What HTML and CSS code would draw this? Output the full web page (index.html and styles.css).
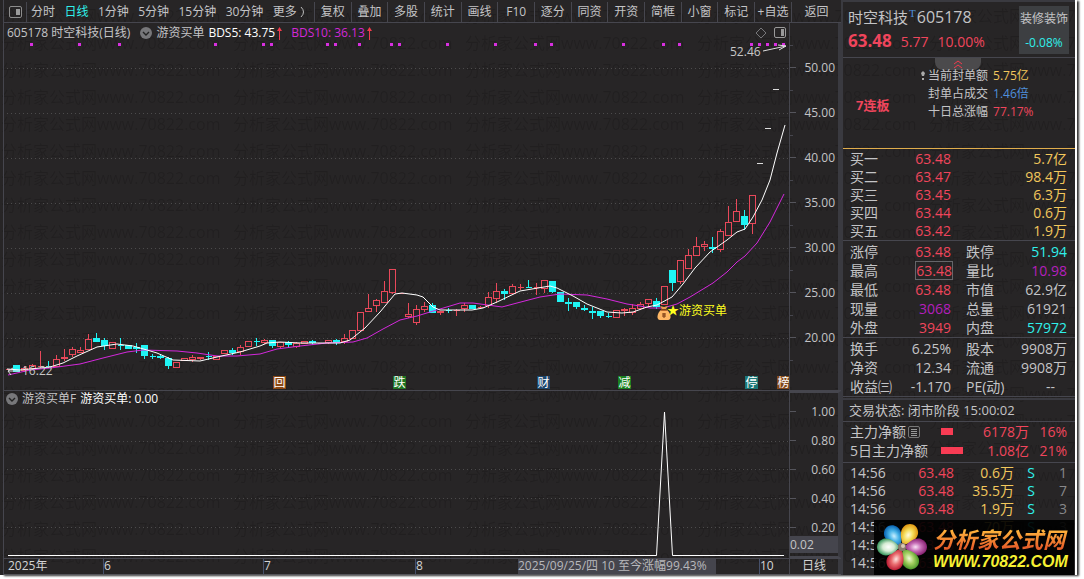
FILE: index.html
```html
<!DOCTYPE html>
<html lang="zh-CN">
<head>
<meta charset="utf-8">
<title>时空科技 605178</title>
<link rel="stylesheet" href="styles.css">
</head>
<body>
<div class="app">
  <svg class="watermark" aria-hidden="true">
    <defs>
      <pattern id="wm" x="1" y="3" width="232" height="27" patternUnits="userSpaceOnUse">
        <text class="watermark-text" x="0" y="19">分析家公式网www.70822.com</text>
      </pattern>
    </defs>
    <rect width="100%" height="100%" fill="url(#wm)"/>
  </svg>

  <main class="main">
    <nav class="toolbar">
      <button class="tool tool-icon" aria-label="侧栏">
        <svg width="13" height="12" viewBox="0 0 13 12"><rect x=".5" y=".5" width="12" height="11" rx="1.5" fill="none" stroke="#8c8c8c"/><rect x="7" y="3" width="4" height="6" fill="#9a9a9a"/></svg>
      </button>
      <div class="periods">
        <button class="period">分时</button><button class="period active">日线</button><button class="period">1分钟</button><button class="period">5分钟</button><button class="period">15分钟</button><button class="period">30分钟</button><button class="period">更多 <svg width="5" height="10" viewBox="0 0 5 10"><path d="M1 0Q6 5 1 10" fill="none" stroke="#bbb"/></svg></button>
      </div>
      <button class="tool">复权</button><button class="tool">叠加</button><button class="tool">多股</button><button class="tool">统计</button><button class="tool">画线</button><button class="tool">F10</button><button class="tool">逐分</button><button class="tool">同资</button><button class="tool">开资</button><button class="tool">简框</button><button class="tool">小窗</button><button class="tool">标记</button><button class="tool">+自选</button><button class="tool tool-back">返回</button>
    </nav>

    <section class="pane price-pane">
      <div class="plot">
        <div class="legend">
          <span class="legend-name">605178 时空科技(日线)</span>
          <svg width="12" height="12" viewBox="0 0 12 12"><circle cx="6" cy="6" r="6" fill="#77777a"/><path d="M3 5l3 3 3-3" fill="none" stroke="#222" stroke-width="1.4"/></svg>
          <span>游资买单</span>
          <span class="white value">BDS5: 43.75<svg class="up" width="5" height="13" viewBox="0 0 5 13"><path d="M2.500 13V2" stroke="#f23b4c"/><path d="M2.500 0L5 4H0z" fill="#f23b4c"/></svg></span>
          <span class="magenta value">BDS10: 36.13<svg class="up" width="5" height="13" viewBox="0 0 5 13"><path d="M2.500 13V2" stroke="#f23b4c"/><path d="M2.500 0L5 4H0z" fill="#f23b4c"/></svg></span>
          <span class="legend-tools">
            <svg width="12" height="12" viewBox="0 0 12 12"><path d="M6 1l5 5-5 5-5-5z" fill="none" stroke="#77777a"/></svg>
            <svg width="12" height="11" viewBox="0 0 12 11"><rect x=".5" y=".5" width="11" height="10" rx="1.5" fill="none" stroke="#9a9a9a"/><rect x="7" y="2" width="3" height="7" fill="#9a9a9a"/></svg>
          </span>
        </div>
        <svg class="chart" viewBox="4 43 785 347" role="img" aria-label="日线K线图">
          <path class="grid" d="M7 68.500H789M7 113.500H789M7 158.500H789M7 203.500H789M7 248.500H789M7 293.500H789M7 338.500H789"/>
          <g id="signals" shape-rendering="crispEdges"></g>
          <g id="candles" shape-rendering="crispEdges"></g>
          <path d="M757 163.500h6M765 128.500h6M773 89.500h6" stroke="#ddd"/>
          <path class="ma-slow" d="M8 375L30 370 50 368 80 364 103 358 127 352 143 350 177 351 197 353 217 356 237 356 260 354 277 349 300 346 327 343 353 342 367 338 383 329 400 320 417 316 430 312 450 306 460 303 473 303 502 307 517 303 540 297 560 294 587 295 607 299 627 304 640 306 650 308 663 308 677 304 690 297 713 283 727 272 737 262 745 256 757 243 770 222 784 194"/>
          <path class="ma-fast" d="M7 369L20 370 50 367 63 363 77 356 97 347 117 344 133 346 147 350 157 353 173 360 200 361 217 357 240 352 260 346 267 343 280 342 300 343 340 343 350 340 365 328 380 312 395 294 402 293 417 295 423 297 433 307 440 310 472 310 483 308 497 302 520 291 532 289 550 286 557 288 573 296 587 304 607 312 622 313 633 312 647 307 657 305 672 297 683 284 695 268 710 252 727 240 737 232 745 229 753 217 762 200 770 180 777 153 785 125"/>
          <text class="note" x="730" y="56">52.46</text>
          <path class="arrow" d="M763 51L786 46M778 45l8 1-7 4"/>
          <text class="note" x="22" y="375">16.22</text>
          <path class="arrow" d="M20 371H8M13 368l-5 3 3 4"/>
          <g transform="translate(657 306)">
            <path d="M5 3L3 0l4 1 4-1-2 3z" fill="#e8a04a"/>
            <path d="M4 4C0 7-1 14 3 14h8c4 0 3-7-1-10z" fill="#ffb765"/>
            <path d="M4 4h6" stroke="#9b4a1d" stroke-width="1.500"/>
            <path d="M5 8h4M5 10h4M7 7v5" stroke="#743713"/>
          </g>
          <text class="signal-text" x="667" y="315">★游资买单</text>
          <g class="tags">
            <rect x="273" y="376" width="13" height="13" fill="#8b4713"/><text x="279.500" y="387">回</text>
            <rect x="393" y="376" width="13" height="13" fill="#1e7422"/><text x="399.500" y="387">跌</text>
            <rect x="537" y="376" width="13" height="13" fill="#1c466d"/><text x="543.500" y="387">财</text>
            <rect x="618" y="376" width="13" height="13" fill="#1a8020"/><text x="624.500" y="387">减</text>
            <rect x="745" y="376" width="13" height="13" fill="#1b7777"/><text x="751.500" y="387">停</text>
            <rect x="777" y="376" width="12" height="13" fill="#83491a"/><text x="783.500" y="387">榜</text>
          </g>
        </svg>
      </div>
      <ul class="axis">
        <li>50.00</li><li>45.00</li><li>40.00</li><li>35.00</li><li>30.00</li><li>25.00</li><li>20.00</li>
      </ul>
    </section>

    <section class="pane signal-pane">
      <div class="plot">
        <div class="legend legend-sub">
          <svg width="12" height="12" viewBox="0 0 12 12"><circle cx="6" cy="6" r="6" fill="#77777a"/><path d="M3 5l3 3 3-3" fill="none" stroke="#222" stroke-width="1.4"/></svg>
          <span>游资买单F</span><span class="white">游资买单: 0.00</span>
        </div>
        <svg class="chart" viewBox="4 407 785 151" role="img" aria-label="游资买单信号">
          <path class="grid" d="M7 441.500H789M7 469.500H789M7 498.500H789M7 527.500H789"/>
          <path class="spike" d="M8 555.500H656.500L664.500 412 672.500 555.500H784"/>
        </svg>
      </div>
      <ul class="axis axis-sub">
        <li>1.00</li><li>0.80</li><li>0.60</li><li>0.40</li><li>0.20</li><li class="cursor">0.02</li>
      </ul>
    </section>

    <footer class="dates">
      <div class="months">
        <span>2025年</span><span class="mark">6</span><span class="mark">7</span><span class="mark">8</span>
        <span class="hover-date">2025/09/25/四 10 至今涨幅99.43%</span><span></span><span class="mark">10</span>
      </div>
      <span class="cycle">日线</span>
    </footer>
  </main>

  <aside class="panel">
    <header class="quote">
      <div>
        <h1 class="stock">时空科技<sup>T</sup><span class="code">605178</span></h1>
        <p class="price red"><b>63.48</b><span>5.77</span><span>10.00%</span></p>
      </div>
      <a class="sector" href="#sector"><span>装修装饰</span><span class="cyan">-0.08%</span></a>
    </header>

    <section class="seal">
      <button class="fold" aria-label="收起"><svg width="10" height="9" viewBox="0 0 10 9"><path d="M1 4l4-3 4 3M1 8l4-3 4 3" fill="none" stroke="#f23b4c"/></svg></button>
      <div class="seal-body">
        <strong class="streak">7连板</strong>
        <table class="seal-table">
          <tr><th><svg class="pin" width="4" height="9" viewBox="0 0 4 9"><path d="M2 0l2 2-1 3H1L0 2z" fill="#aaa"/><path d="M1 7h2v2H1z" fill="#aaa"/></svg>当前封单额</th><td class="yellow">5.75亿</td></tr>
          <tr><th>封单占成交</th><td class="blue">1.46倍</td></tr>
          <tr><th>十日总涨幅</th><td class="red">77.17%</td></tr>
        </table>
      </div>
    </section>

    <table class="rows bids">
      <tr><th>买一</th><td class="red">63.48</td><td class="yellow">5.7亿</td></tr>
      <tr><th>买二</th><td class="red">63.47</td><td class="yellow">98.4万</td></tr>
      <tr><th>买三</th><td class="red">63.45</td><td class="yellow">6.3万</td></tr>
      <tr><th>买四</th><td class="red">63.44</td><td class="yellow">0.6万</td></tr>
      <tr><th>买五</th><td class="red">63.42</td><td class="yellow">1.9万</td></tr>
    </table>

    <table class="rows stats">
      <tr><th>涨停</th><td class="red">63.48</td><th>跌停</th><td class="cyan">51.94</td></tr>
      <tr><th>最高</th><td class="red"><span class="boxed">63.48</span></td><th>量比</th><td class="purple">10.98</td></tr>
      <tr><th>最低</th><td class="red">63.48</td><th>市值</th><td>62.9亿</td></tr>
      <tr><th>现量</th><td class="purple">3068</td><th>总量</th><td>61921</td></tr>
      <tr><th>外盘</th><td class="red">3949</td><th>内盘</th><td class="cyan">57972</td></tr>
    </table>

    <table class="rows stats">
      <tr><th>换手</th><td>6.25%</td><th>股本</th><td>9908万</td></tr>
      <tr><th>净资</th><td>12.34</th><th>流通</th><td>9908万</td></tr>
      <tr><th>收益㈢</th><td>-1.170</td><th>PE(动)</th><td class="empty">--</td></tr>
    </table>

    <p class="status">交易状态: 闭市阶段 15:00:02</p>

    <table class="rows flow">
      <tr><th>主力净额<svg class="doc" width="12" height="12" viewBox="0 0 12 12"><rect x=".5" y=".5" width="11" height="11" rx="1.5" fill="none" stroke="#777"/><path d="M3 3.500h6M3 5.500h6M3 7.500h6M3 9.500h6" stroke="#999"/></svg></th><td><span class="bar bar-day"></span></td><td class="red">6178万</td><td class="red">16%</td></tr>
      <tr><th>5日主力净额</th><td><span class="bar bar-week"></span></td><td class="red">1.08亿</td><td class="red">21%</td></tr>
    </table>

    <div class="trades">
      <table class="rows ticks">
        <tr><th>14:56</th><td class="red">63.48</td><td class="yellow">0.6万</td><td class="cyan side">S</td><td class="count">1</td></tr>
        <tr><th>14:56</th><td class="red">63.48</td><td class="yellow">35.5万</td><td class="cyan side">S</td><td class="count">7</td></tr>
        <tr><th>14:56</th><td class="red">63.48</td><td class="yellow">1.9万</td><td class="cyan side">S</td><td class="count">3</td></tr>
        <tr><th>14:56</th><td class="red">63.48</td><td class="yellow">70万</td><td class="cyan side">S</td><td class="count">3</td></tr>
        <tr><th>14:56</th><td class="red">63.48</td><td></td><td></td><td></td></tr>
        <tr><th>14:56</th><td class="red">63.48</td><td></td><td></td><td></td></tr>
      </table>
      <a class="logo" href="#site">
        <svg width="54" height="54" viewBox="0 0 54 54" aria-hidden="true">
          <defs>
            <radialGradient id="p1"><stop offset="0" stop-color="#c9efff"/><stop offset=".5" stop-color="#48b4e8"/><stop offset="1" stop-color="#0d68b4"/></radialGradient>
            <radialGradient id="p2"><stop offset="0" stop-color="#fffce0"/><stop offset=".5" stop-color="#f4dc58"/><stop offset="1" stop-color="#e09a14"/></radialGradient>
            <radialGradient id="p3"><stop offset="0" stop-color="#fbe3f6"/><stop offset=".5" stop-color="#c46ab4"/><stop offset="1" stop-color="#8a2474"/></radialGradient>
            <radialGradient id="p4"><stop offset="0" stop-color="#effbd8"/><stop offset=".5" stop-color="#a5cf62"/><stop offset="1" stop-color="#4f9a2c"/></radialGradient>
            <radialGradient id="p5"><stop offset="0" stop-color="#ffe6e2"/><stop offset=".5" stop-color="#ea6d70"/><stop offset="1" stop-color="#bc1f36"/></radialGradient>
            <radialGradient id="p6"><stop offset="0" stop-color="#fff"/><stop offset=".5" stop-color="#d6ecd4"/><stop offset="1" stop-color="#3f9b62"/></radialGradient>
            <path id="petal" d="M0-2C-4-6-10-12-8-19-5-27 5-27 8-19 10-12 4-6 0-2z"/>
          </defs>
          <g transform="translate(28 26)">
            <use href="#petal" fill="url(#p1)" transform="rotate(-36)"/>
            <use href="#petal" fill="url(#p2)" transform="rotate(28)"/>
            <use href="#petal" fill="url(#p3)" transform="rotate(90)"/>
            <use href="#petal" fill="url(#p4)" transform="rotate(148)"/>
            <use href="#petal" fill="url(#p5)" transform="rotate(206)"/>
            <use href="#petal" fill="url(#p6)" transform="rotate(270)"/>
            <circle r="4" fill="#8b7a6c"/><circle cx="1" cy="-1" r="2" fill="#d8c8b4"/>
          </g>
        </svg>
        <span class="logo-words"><span class="logo-name">分析家公式网</span><span class="logo-url">WWW.70822.COM</span></span>
      </a>
    </div>
  </aside>
</div>
<script src="chart.js"></script>
</body>
</html>
```

FILE: styles.css
```css
* { box-sizing: border-box; }

body {
  margin: 0;
  background: #fff;
  color: #c4c4c6;
  font-family: "Open Sans", "Noto Sans CJK SC", sans-serif;
  font-size: 12px;
  line-height: 18px;
}

button { padding: 0; border: 0; background: none; color: inherit; font: inherit; cursor: pointer; }
a { color: inherit; text-decoration: none; }
p, h1, ul { margin: 0; padding: 0; }
table { border-collapse: collapse; }
th, td { padding: 0; font-weight: 400; white-space: nowrap; }
th { text-align: left; }
svg { flex: none; }

.red { color: #f0455c; }
.cyan { color: #2ff0ea; }
.yellow { color: #f2c75c; }
.blue { color: #4f8fdc; }
.purple { color: #b41fbc; }
.magenta { color: #d228d6; }
.white { color: #fff; }

.app {
  position: relative;
  display: flex;
  margin: 0 9px 3px 0;
  background: #272526;
  box-shadow: 2px 0 0 #fff, 4px 1px 2px #333;
}
.watermark { position: absolute; inset: 0; width: 100%; height: 100%; pointer-events: none; }
.watermark-text { fill: #211f20; font-size: 16px; }

.main {
  position: relative;
  flex: 1;
  min-width: 0;
  margin-left: 3px;
  border-left: 1px solid #46464e;
  display: flex;
  flex-direction: column;
}

/* toolbar */
.toolbar { display: flex; height: 23px; padding-top: 2px; border-bottom: 1px solid #46464e; }
.tool { flex: 37 1 0; border-left: 1px solid #46464e; white-space: nowrap; }
.tool-icon { flex: 0 0 22px; border-left: 0; display: flex; align-items: center; justify-content: center; }
.tool-back { flex-grow: 51; }
.periods { flex: 284 1 0; display: flex; align-items: center; justify-content: space-between; padding: 0 9px 0 4px; border-left: 1px solid #46464e; }
.period { white-space: nowrap; }
.period svg { vertical-align: -1px; margin-left: 0; }
.active { color: #2ff0ea; }

/* chart panes */
.pane { display: flex; }
.plot { flex: 1; min-width: 0; }
.chart { display: block; width: 100%; height: auto; }
.legend { display: flex; align-items: center; gap: 4px; height: 20px; padding: 0 3px; white-space: nowrap; }
.legend-name { margin-right: 6px; }
.value { display: flex; align-items: center; }
.magenta.value { margin-left: 5px; }
.up { margin-left: 2px; }
.legend-tools { display: flex; gap: 7px; margin-left: auto; }
.legend-sub { height: 16px; padding-left: 2px; }
.signal-pane { border-top: 1px solid #46464e; }

.axis {
  width: 52px;
  padding-top: 36px;
  border-left: 1px solid #46464e;
  border-right: 3px solid #3a3a40;
  list-style: none;
  display: flex;
  flex-direction: column;
  gap: 28px;
  line-height: 17px;
  background: repeating-linear-gradient(#0000 0 22px, #46464e 22px 23px, #0000 23px 45px) left top / 3px 100% no-repeat;
}
.axis li { display: flex; align-items: center; justify-content: space-between; padding-right: 3px; }
.axis li::before { content: ""; width: 6px; height: 1px; background: #55555c; }
.axis-sub { padding-top: 10px; gap: 12px; border-top: 2px solid #46464e; border-bottom: 2px solid #46464e; background: none; }
.axis-sub .cursor { margin-top: -12px; background: #45454d; }
.axis .cursor::before { display: none; }

.grid { stroke: #4c4b4c; stroke-dasharray: 1 3; fill: none; }
.ma-fast { fill: none; stroke: #fff; stroke-width: 1; }
.ma-slow { fill: none; stroke: #d428dc; stroke-width: 1; }
.spike { fill: none; stroke: #fff; stroke-width: 1; }
.note { fill: #c8c8c8; font-size: 12px; }
.arrow { fill: none; stroke: #ddd; }
.signal-text { fill: #ffff1e; font-size: 12px; }
.tags { fill: #fff; font-size: 12px; text-anchor: middle; }
.dot { fill: #d82fe0; }
.rise { fill: #272526; stroke: #e8485a; }
.fall { fill: #1ff4f4; stroke: #1ff4f4; }

/* date axis */
.dates { display: flex; height: 17px; line-height: 14px; border-top: 1px solid #46464e; border-bottom: 1px solid #55555a; color: #d4d4d4; }
.months { flex: 1; display: grid; grid-template-columns: 99fr 160fr 152fr 103fr 198fr 43fr 30fr; white-space: nowrap; }
.months span:first-child { padding-left: 4px; }
.mark { border-left: 1px solid #46506a; }
.hover-date { background: #45454d; color: #b8b8bc; }
.cycle { width: 52px; border-left: 1px solid #46464e; border-right: 3px solid #3a3a40; text-align: center; }

/* quote panel */
.panel { position: relative; display: flex; flex-direction: column; width: 234px; border-left: 2px solid #3a3a40; border-top: 2px solid #3a3a40; }
.quote { display: flex; justify-content: space-between; height: 56px; padding: 4px 6px 0 5px; border-bottom: 1px solid #46464e; }
.stock { font-size: 15px; font-weight: 400; line-height: 22px; }
.stock sup { color: #4f8fdc; font-family: "Liberation Serif", serif; font-size: 11px; line-height: 10px; margin: 0 1px; }
.code { font-size: 16px; }
.price { display: flex; align-items: baseline; gap: 9px; font-size: 14px; line-height: 26px; }
.price b { font-size: 17px; }
.sector { display: flex; flex-direction: column; gap: 6px; width: 50px; height: 48px; padding-top: 4px; background: #3d3f42; text-align: center; white-space: nowrap; }

.seal { height: 91px; border-bottom: 1px solid #e0ad4c; }
.fold { display: block; width: 46px; height: 12px; margin-left: 92px; background: #4b4a4c; border-radius: 0 0 8px 8px; line-height: 9px; }
.seal-body { display: flex; align-items: center; padding-left: 13px; margin-top: -3px; }
.streak { width: 72px; color: #f0455c; font-size: 13px; padding-top: 22px; }
.seal-table th { position: relative; padding-right: 5px; }
.pin { position: absolute; left: -7px; top: 4px; }

.rows { width: 100%; table-layout: fixed; font-size: 14px; border-bottom: 1px solid #46464e; }
.rows td { text-align: right; }
.rows tr > :first-child { padding-left: 7px; }
.rows tr > :last-child { padding-right: 8px; }
.rows tr { height: 19px; line-height: 19px; }
.bids tr, .ticks tr { height: 18px; line-height: 18px; }
.bids { margin: 1px 0; }
.bids th { width: 56px; }
.bids td:nth-child(2) { width: 52px; }
.stats th { width: 56px; }
.stats td:nth-child(2) { width: 52px; }
.stats th:nth-child(3) { width: 60px; padding-left: 15px; }
.stats { margin-bottom: 1px; }
.boxed { display: inline-block; line-height: 17px; margin-right: -1px; outline: 1px solid #66666a; }
.rows tr > .empty { padding-right: 20px; }
.status { padding-left: 6px; line-height: 21px; font-size: 13px; border-top: 2px solid #3a3a40; border-bottom: 1px solid #46464e; }
.flow { margin-bottom: 1px; }
.flow tr:last-child { height: 21px; vertical-align: top; }
.flow th { width: 98px; }
.flow td:nth-child(2) { width: 28px; text-align: left; }
.flow td:nth-child(4) { width: 46px; }
.flow .doc { margin-left: 2px; vertical-align: -1px; }
.bar { display: inline-block; height: 7px; background: #f83c54; vertical-align: 2px; }
.bar-day { width: 12px; }
.bar-week { width: 22px; }
.trades { position: relative; flex: 1; }
.ticks { border: 0; }
.ticks th { width: 56px; }
.ticks td:nth-child(2) { width: 55px; }
.ticks td:nth-child(3) { width: 60px; }
.ticks td:nth-child(4) { width: 21px; }
.count { color: #88888a; }

.logo {
  position: absolute;
  right: 1px;
  bottom: 0;
  display: flex;
  align-items: center;
  width: 200px;
  height: 55px;
  background: rgba(0, 0, 0, .92);
  white-space: nowrap;
}
.logo-words { display: flex; flex-direction: column; margin-left: 5px; font-style: italic; font-weight: 700; }
.logo-name { font-size: 22px; line-height: 28px; color: #f58a24; background: linear-gradient(#ffb43c 20%, #e8602a 80%); background-clip: text; -webkit-text-fill-color: transparent; }
.logo-url { font-family: "Liberation Sans", sans-serif; font-size: 16px; line-height: 18px; color: #f6f032; }
```

FILE: chart.js
```js
// Each candle: [x, direction, bodyTop, bodyBottom, high, low]
const candles = [
  [8,1,369,369,369,369],[16,0,365,371,365,371],[24,1,368,370,366,371],[32,1,365,368,364,369],[40,1,366,366,351,367],
  [48,0,366,366,361,367],[56,1,359,366,355,366],[64,1,357,358,349,360],[72,1,349,354,347,356],[80,1,350,352,347,352],
  [88,1,339,349,334,349],[96,0,338,341,333,341],[104,0,340,345,338,349],[112,1,342,348,342,348],[120,0,345,345,338,349],
  [128,0,345,348,345,348],[136,0,347,348,343,352],[144,0,345,355,345,358],[152,0,356,356,354,358],[160,0,356,357,354,358],
  [168,0,358,365,357,368],[176,1,362,367,362,367],[184,1,358,360,358,360],[192,1,357,359,355,361],[200,1,357,358,357,359],
  [208,0,356,356,352,359],[216,1,356,359,356,359],[224,1,350,353,350,353],[232,0,350,352,348,354],[240,1,347,351,345,354],
  [248,1,341,346,341,346],[256,0,341,341,338,345],[264,1,340,342,339,343],[272,0,340,345,340,347],[280,1,342,346,342,347],
  [288,0,342,344,341,346],[296,1,343,346,342,347],[304,1,341,343,341,343],[312,0,341,342,340,344],[320,1,343,343,343,343],
  [328,1,340,342,340,343],[336,0,340,342,339,344],[344,1,338,341,334,343],[352,1,330,338,330,338],[360,1,312,330,312,330],
  [368,1,308,311,294,311],[376,1,300,305,299,311],[384,1,291,302,281,302],[392,1,269,292,269,293],[400,1,293,293,293,293],
  [408,1,314,316,303,317],[416,1,309,322,305,324],[424,1,306,309,302,311],[432,0,305,312,303,312],[440,1,311,312,311,314],
  [448,0,310,310,308,312],[456,1,310,310,309,315],[464,1,305,308,303,311],[472,0,305,308,305,308],[480,1,307,307,306,308],
  [488,1,297,305,292,307],[496,1,291,298,283,302],[504,0,291,293,289,299],[512,1,286,293,284,293],[520,1,287,287,284,289],
  [528,0,287,287,280,287],[536,1,287,287,283,294],[544,1,280,288,280,292],[552,0,281,291,281,292],[560,0,292,301,292,301],
  [568,0,302,303,298,310],[576,0,302,306,302,308],[584,0,308,309,305,310],[592,0,311,312,307,318],[600,0,311,315,311,317],
  [608,0,316,316,313,317],[616,1,310,317,310,317],[624,1,309,310,308,315],[632,1,308,312,304,314],[640,1,304,308,302,309],
  [648,1,299,303,299,306],[656,0,301,306,298,308],[664,1,286,304,286,304],[672,0,270,282,270,290],[680,1,260,281,260,283],
  [688,1,255,268,249,268],[696,1,246,255,237,255],[704,1,244,246,241,250],[712,0,247,248,237,252],[720,1,231,249,229,251],
  [728,1,222,235,206,235],[736,1,211,221,199,221],[744,0,216,224,210,229],[752,1,195,223,195,233]
];
const signals = [31,79,119,215,263,271,327,335,359,391,399,447,495,535,551,623,663,679,751,759,767,775,783];

document.getElementById("candles").innerHTML = candles.map(([x, up, top, bottom, high, low]) => {
  const c = x + 0.5;
  const body = top === bottom
    ? `M${c - 3} ${top + 0.5}h6`
    : `M${c - 3} ${top + 0.5}h6V${bottom + 0.5}h-6z`;
  return `<path class="${up ? "rise" : "fall"}" d="M${c} ${high}V${top}M${c} ${bottom + 1}V${low + 1}${body}"/>`;
}).join("");

document.getElementById("signals").innerHTML = signals
  .map(x => `<rect class="dot" x="${x - 1}" y="43" width="3" height="3"/>`)
  .join("");
```
